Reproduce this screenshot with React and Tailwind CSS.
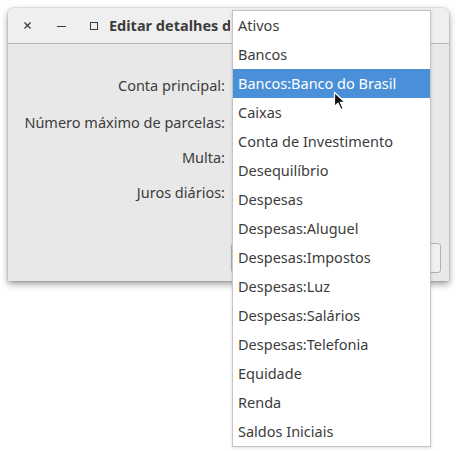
const contas = [
  'Ativos',
  'Bancos',
  'Bancos:Banco do Brasil',
  'Caixas',
  'Conta de Investimento',
  'Desequilíbrio',
  'Despesas',
  'Despesas:Aluguel',
  'Despesas:Impostos',
  'Despesas:Luz',
  'Despesas:Salários',
  'Despesas:Telefonia',
  'Equidade',
  'Renda',
  'Saldos Iniciais',
];

const campos = ['Conta principal:', 'Número máximo de parcelas:', 'Multa:', 'Juros diários:'];

function Cursor() {
  return (
    <svg className="absolute left-[333px] top-[91px]" width="14" height="20" viewBox="0 0 14 20">
      <path
        d="M1.5 1.5 L1.5 15.5 L5 12.2 L8 18.5 L10.2 17.5 L7.3 11.3 L12 11.3 Z"
        fill="#111"
        stroke="#fff"
        strokeWidth="1.2"
        strokeLinejoin="round"
      />
    </svg>
  );
}

export default function App() {
  return (
    <div
      className="relative w-[456px] h-[451px] bg-white overflow-hidden text-[#3c3c3c]"
      style={{ fontFamily: '"Noto Sans", "Open Sans", sans-serif' }}
    >
      <div className="ml-2 mt-2 w-[441px] h-[273px] flex flex-col rounded-t-[6px] bg-[#e8e8e8] shadow-[0_3px_7px_rgba(0,0,0,0.4),0_0_0_1px_rgba(0,0,0,0.08)]">
        <div className="h-[36px] flex items-center pl-[2px] rounded-t-[6px] bg-[#efefef] border-b border-[#b5b5b5]">
          <div className="w-[34px] flex justify-center">
            <svg width="7" height="7" viewBox="0 0 7 7">
              <path d="M0.5 0.5 L6.5 6.5 M6.5 0.5 L0.5 6.5" stroke="#3c3c3c" strokeWidth="1.3" />
            </svg>
          </div>
          <div className="w-[34px] flex justify-center">
            <div className="w-[9px] h-[1px] bg-[#3c3c3c] mt-[2px]" />
          </div>
          <div className="w-[31px] flex justify-center">
            <div className="w-[8px] h-[8px] border border-[#3c3c3c]" />
          </div>
          {/* the popup covers the rest of the title */}
          <span className="w-[121px] overflow-hidden text-[14.5px] font-bold text-[#3c3c3c] whitespace-nowrap">
            Editar detalhes do plano
          </span>
        </div>
        <div className="flex-1 flex flex-col pt-[24px] text-[14.5px]">
          {campos.map((c, i) => (
            <div key={c} className={`w-[217px] h-[35px] flex items-center justify-end ${i === 0 ? 'mb-[2px]' : ''}`}>
              {c}
            </div>
          ))}
          <div className="flex-1" />
          <div className="flex justify-end pr-[8px] pb-[8px]">
            <div className="w-[210px] h-[30px] rounded-[3px] border border-[#b0b0b0] bg-[#f0f0f0]" />
          </div>
        </div>
      </div>

      <div className="absolute left-[232px] top-[10px] w-[199px] h-[437px] bg-white border border-[#c4c4c4] shadow-[0_1px_3px_rgba(0,0,0,0.15)] text-[14.5px]">
        {contas.map((c, i) => (
          <div
            key={c}
            className={`h-[29px] flex items-center px-[5px] whitespace-nowrap ${i === 2 ? 'bg-[#4a90d9] text-white' : 'text-[#3c3c3c]'}`}
          >
            {c}
          </div>
        ))}
      </div>
      <Cursor />
    </div>
  );
}
